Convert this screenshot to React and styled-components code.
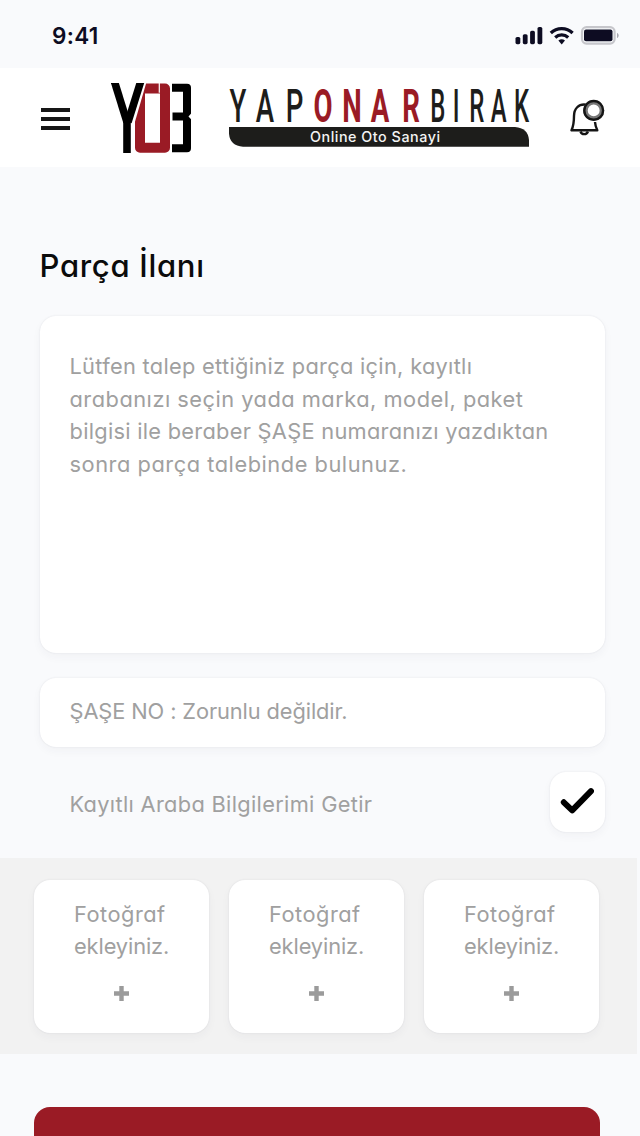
import React from 'react';
import styled, { createGlobalStyle } from 'styled-components';

const Global = createGlobalStyle`
  * { box-sizing: border-box; }
  body { margin: 0; background: #f9fafc; }
`;

const Screen = styled.div`
  width: 640px;
  height: 1136px;
  overflow: hidden;
  display: flex;
  flex-direction: column;
  background: #f9fafc;
  font-family: Inter, 'Noto Sans', sans-serif;
  font-feature-settings: 'cv11';
`;

const StatusBar = styled.div`
  height: 68px;
  flex: none;
  display: flex;
  align-items: center;
  justify-content: space-between;
  padding: 3px 20px 0 52px;
`;

const Clock = styled.span`
  font-size: 22.5px;
  font-weight: 600;
  line-height: 28px;
  letter-spacing: 0.3px;
  color: #0d0c22;
`;

const Header = styled.header`
  height: 99px;
  flex: none;
  display: flex;
  align-items: center;
  background: #fff;
  padding: 0 34px 0 41px;
`;

const MenuButton = styled.button`
  display: flex;
  flex-direction: column;
  gap: 5px;
  width: 29px;
  margin: 2px 40.5px 0 0;
  padding: 0;
  border: 0;
  background: none;
`;

const MenuLine = styled.span`
  height: 4px;
  background: #161616;
`;

const Brand = styled.div`
  display: flex;
  align-items: center;
  gap: 35.5px;
  flex: 1;
`;

const LogoSvg = styled.svg`
  overflow: visible;
  flex: none;
`;

const Title = styled.h1`
  margin: 79px 0 0;
  padding-left: 39.5px;
  font-size: 31px;
  font-weight: 500;
  line-height: 40px;
  letter-spacing: 0.7px;
  color: #0b0b0b;
`;

const Form = styled.div`
  display: flex;
  flex-direction: column;
  padding: 30px 35px 0 40px;
`;

const Card = styled.div`
  background: #fff;
  border-radius: 16px;
  box-shadow: 0 0 2px rgba(40, 40, 70, 0.1), 0 4px 10px rgba(40, 40, 70, 0.04);
`;

const Message = styled(Card)`
  height: 337px;
  padding: 34px 29.5px;
`;

const ChassisField = styled(Card)`
  height: 69px;
  margin-top: 25px;
  padding: 17px 29.5px;
`;

const CheckRow = styled.div`
  display: flex;
  justify-content: space-between;
  align-items: center;
  height: 60px;
  margin-top: 25px;
  padding-left: 29.5px;
`;

const CheckLabel = styled.div`
  padding-top: 5px;
`;

const CheckBox = styled(Card)`
  width: 55px;
  height: 60px;
  display: flex;
  align-items: center;
  justify-content: center;
  padding: 0 1px 2px 0;
`;

const Line = styled.div`
  font-size: 21.8px;
  font-weight: 400;
  line-height: 32.5px;
  letter-spacing: ${(p) => p.$track || 0}px;
  white-space: nowrap;
  color: #a0a0a0;
`;

const Photos = styled.div`
  flex: none;
  display: flex;
  gap: 20px;
  width: 637px;
  height: 196px;
  margin-top: 26px;
  padding: 22px 34px 0;
  background: #f2f2f2;
`;

const PhotoCard = styled(Card)`
  width: 175px;
  height: 153px;
  padding: 17.5px 0 0 40px;
`;

const PlusIcon = styled.svg`
  display: block;
  margin: 23px 0 0 40px;
`;

const Submit = styled.button`
  flex: none;
  width: 566px;
  height: 70px;
  margin: 53px 0 0 34px;
  border: 0;
  border-radius: 16px;
  background: #9a1b25;
`;

const StatusIcons = () => (
  <svg width="106" height="22" viewBox="514 25 106 22">
    <g fill="#0d0c22">
      <rect x="515.5" y="37" width="4.8" height="7.2" rx="1.6" />
      <rect x="522.8" y="34.2" width="4.8" height="10" rx="1.6" />
      <rect x="530.1" y="30.8" width="4.8" height="13.4" rx="1.6" />
      <rect x="537.5" y="27" width="4.8" height="17.2" rx="1.6" />
      <path d="M558.4 40.6a5 5 0 0 1 6.6 0l-3.3 3.8z" />
      <rect x="584" y="29.6" width="28.5" height="11.6" rx="2" />
    </g>
    <g fill="none" stroke="#0d0c22" strokeWidth="3.2">
      <path d="M550.8 33a15.6 15.6 0 0 1 21.8 0" />
      <path d="M555.2 37.5a9.6 9.6 0 0 1 13 0" />
    </g>
    <rect x="582" y="27.2" width="32.6" height="16.4" rx="4.5" fill="none" stroke="#c6c6cb" strokeWidth="2.2" />
    <path d="M617 33v5c1-.3 1.7-1.3 1.7-2.5s-.7-2.2-1.7-2.5z" fill="#a8a8b0" />
  </svg>
);

const Monogram = () => (
  <svg width="82" height="70" viewBox="111 83.2 82 69.5">
    <rect x="140" y="88.4" width="25" height="59.2" fill="#fff" stroke="#9a1b25" strokeWidth="10" strokeLinejoin="round" />
    <path d="M159.3 83v9.8" stroke="#fff" strokeWidth="1.2" />
    <path d="M145.5 80L131 130" stroke="#fff" strokeWidth="3" />
    <path d="M134 80h9L133 116z" fill="#fff" />
    <g stroke="#000" fill="none">
      <path d="M114 80L127 122" strokeWidth="7.6" />
      <path d="M141 80.5L128 122" strokeWidth="7.6" />
      <path d="M127 116v38" strokeWidth="7.6" />
      <path d="M172 87.6h15v60.6h-15M172.5 116.4h13" strokeWidth="8" strokeLinejoin="round" />
    </g>
    <path d="M192 112.5l-3.5 3.9 3.5 3.9z" fill="#fff" />
  </svg>
);

const Wordmark = () => (
  <LogoSvg width="302" height="64" viewBox="228 86 302 64" fontFamily="Roboto, sans-serif" fontSize="46" textAnchor="middle">
    <text transform="translate(0 121.8) scale(.6 1)" x="396.7 441.7 491" fontWeight="500" fill="#1d1d1b">YAP</text>
    <text transform="translate(0 121.8) scale(.6 1)" x="538.3 586.7 633.3 685" fontWeight="700" fill="#9a1b25">ONAR</text>
    <text transform="translate(0 121.8) scale(.52 1)" x="842 877 917 959 1003" fontWeight="500" fill="#1d1d1b">BIRAK</text>
    <path d="M229 127H515q13 1 14 13v6.8H243q-13-1-14-13z" fill="#1d1d1b" />
    <text x="375" y="142.2" fontFamily="Inter, sans-serif" fontSize="14.3" fontWeight="500" fill="#f4f4f4" textLength="130" style={{ fontFeatureSettings: 'normal' }}>Online Oto Sanayi</text>
  </LogoSvg>
);

const Bell = () => (
  <svg width="38" height="40" viewBox="568 97 38 40" fill="none" stroke="#151515">
    <path d="M586 103.7c-7.5-1-12 4-12 11.3 0 6-.3 9.5-2.5 14.3h25.8c-1.400-3-2.100-5-2.300-8.300" strokeWidth="2.4" strokeLinejoin="round" />
    <path d="M580.5 130.5a3.9 3.9 0 0 0 7.4 0" strokeWidth="2.4" />
    <circle cx="593.7" cy="109.4" r="8.2" fill="#fff" stroke="#777" strokeWidth="4.5" />
    <circle cx="593.7" cy="109.4" r="9.4" strokeWidth="2.4" />
  </svg>
);

const Check = () => (
  <svg width="34" height="28" viewBox="560 787 34 28" fill="none" stroke="#000" strokeWidth="6" strokeLinecap="round" strokeLinejoin="round">
    <path d="M563.8 802.3l8.4 8L591 791.2" />
  </svg>
);

const Plus = () => (
  <PlusIcon width="15" height="15" viewBox="0 0 15 15">
    <path d="M7.5 0v15M0 7.500h15" stroke="#9b9b9b" strokeWidth="4.4" />
  </PlusIcon>
);

const MESSAGE = [
  ['Lütfen talep ettiğiniz parça için, kayıtlı', 0.3],
  ['arabanızı seçin yada marka, model, paket', 0.5],
  ['bilgisi ile beraber ŞAŞE numaranızı yazdıktan', 0.28],
  ['sonra parça talebinde bulunuz.', 0.54],
];

export default function App() {
  return (
    <Screen>
      <Global />
      <StatusBar>
        <Clock>9:41</Clock>
        <StatusIcons />
      </StatusBar>
      <Header>
        <MenuButton aria-label="Menü">
          <MenuLine />
          <MenuLine />
          <MenuLine />
        </MenuButton>
        <Brand>
          <Monogram />
          <Wordmark />
        </Brand>
        <Bell />
      </Header>
      <Title>Parça İlanı</Title>
      <Form>
        <Message>
          {MESSAGE.map(([text, track]) => (
            <Line key={text} $track={track}>{text}</Line>
          ))}
        </Message>
        <ChassisField>
          <Line $track={-0.1}>ŞAŞE NO : Zorunlu değildir.</Line>
        </ChassisField>
        <CheckRow>
          <CheckLabel>
            <Line $track={0.32}>Kayıtlı Araba Bilgilerimi Getir</Line>
          </CheckLabel>
          <CheckBox><Check /></CheckBox>
        </CheckRow>
      </Form>
      <Photos>
        {[0, 1, 2].map((i) => (
          <PhotoCard key={i}>
            <Line $track={0.5}>Fotoğraf</Line>
            <Line $track={-0.1}>ekleyiniz.</Line>
            <Plus />
          </PhotoCard>
        ))}
      </Photos>
      <Submit aria-label="Gönder" />
    </Screen>
  );
}
